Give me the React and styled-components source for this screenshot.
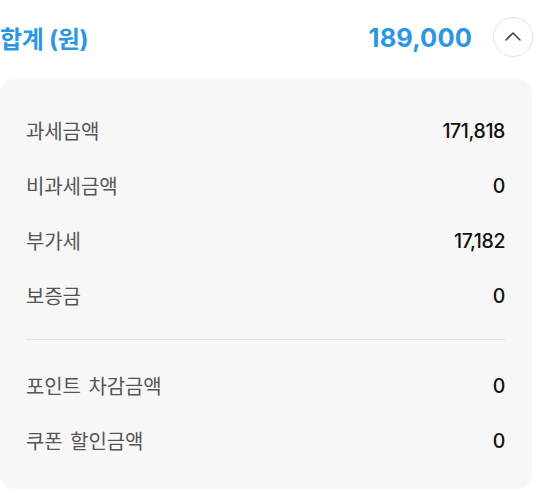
import React from "react";
import styled, { createGlobalStyle } from "styled-components";

const Global = createGlobalStyle`
  html, body { margin: 0; padding: 0; background: #ffffff; }
  body { font-family: Inter, "Noto Sans CJK KR", "Noto Sans", sans-serif; }
`;

const Page = styled.div`
  width: 541px;
  height: 493px;
  box-sizing: border-box;
  padding: 0 9px 0 0;
  overflow: hidden;
`;

const Header = styled.div`
  height: 79px;
  display: flex;
  align-items: center;
  justify-content: space-between;
  padding-bottom: 5px;
  box-sizing: border-box;
`;

const Title = styled.div`
  font-size: 24px;
  font-weight: 700;
  color: #2c96e1;
  letter-spacing: -0.3px;
`;

const Right = styled.div`
  display: flex;
  align-items: center;
  gap: 21px;
`;

const Total = styled.div`
  font-size: 25.5px;
  font-weight: 700;
  color: #2c96e1;
  letter-spacing: 0.1px;
`;

const ToggleButton = styled.button`
  width: 40px;
  height: 40px;
  border-radius: 50%;
  border: 1px solid #e0e0e0;
  background: #fff;
  display: flex;
  align-items: center;
  justify-content: center;
  padding: 0;
  margin-right: -1px;
`;

const Card = styled.div`
  background: #f7f7f7;
  border-radius: 14px;
  padding: 24px 27px 21px 26px;
  height: 410px;
  box-sizing: border-box;
`;

const Row = styled.div`
  height: 55px;
  display: flex;
  align-items: center;
  justify-content: space-between;
`;

const Label = styled.span`
  font-size: 20px;
  color: #555555;
  font-weight: 400;
  letter-spacing: -0.1px;
  word-spacing: 2px;
`;

const Value = styled.span`
  font-size: 19.5px;
  color: #111111;
  font-weight: 500;
  letter-spacing: -0.4px;
`;

const Divider = styled.div`
  height: 1px;
  background: #e2e2e2;
  margin: 16px 0 18px;
`;

const top = [
  ["과세금액", "171,818"],
  ["비과세금액", "0"],
  ["부가세", "17,182"],
  ["보증금", "0"],
];
const bottom = [
  ["포인트 차감금액", "0"],
  ["쿠폰 할인금액", "0"],
];

export default function App() {
  return (
    <Page>
      <Global />
      <Header>
        <Title>합계 (원)</Title>
        <Right>
          <Total>189,000</Total>
          <ToggleButton aria-label="접기">
            <svg width="24" height="24" viewBox="0 0 24 24" fill="none" stroke="#444" strokeWidth="1.6" strokeLinecap="round" strokeLinejoin="round">
              <path d="M5 15l7-7 7 7" />
            </svg>
          </ToggleButton>
        </Right>
      </Header>
      <Card>
        {top.map(([l, v]) => (
          <Row key={l}>
            <Label>{l}</Label>
            <Value>{v}</Value>
          </Row>
        ))}
        <Divider />
        {bottom.map(([l, v]) => (
          <Row key={l}>
            <Label>{l}</Label>
            <Value>{v}</Value>
          </Row>
        ))}
      </Card>
    </Page>
  );
}
